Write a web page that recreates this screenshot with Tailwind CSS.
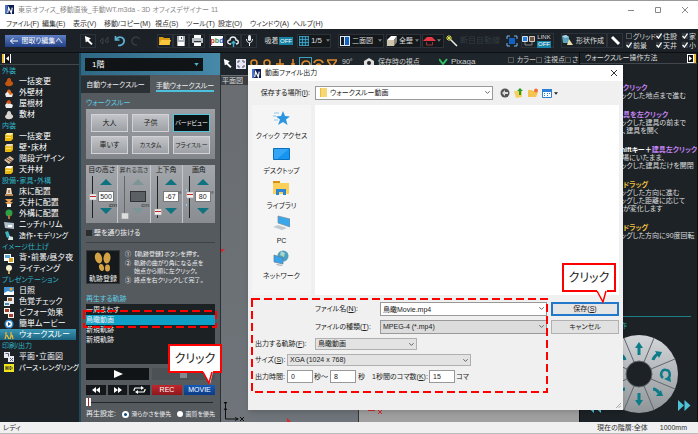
<!DOCTYPE html>
<html lang="ja">
<head>
  <meta charset="UTF-8">
  <title>3D オフィスデザイナー 11</title>
  <script src="https://cdn.jsdelivr.net/npm/@tailwindcss/browser@4"></script>
</head>
<body class="h-screen overflow-hidden flex flex-col relative bg-[#1d2327] font-['Liberation_Sans','Noto_Sans_CJK_JP',sans-serif] [font-feature-settings:'palt'] text-[7px] leading-[10px] whitespace-nowrap">

<!-- Shared icons -->
<svg class="hidden">
  <symbol id="logo" viewBox="0 0 10 10"><path fill="#0d1c50" d="M0 0h10v10H0z"/><path fill="#4a74c8" d="M0 0h3l-1 10H0z"/><path fill="none" stroke="#fff" stroke-width="1.3" d="M3 9l1-6 3 6 1-6"/></symbol>
  <symbol id="cursor" viewBox="0 0 12 12"><path fill="#fff" d="M2 1l1 7 2-1 4 4 1.500-1.500-4-4 2-2z"/></symbol>
  <symbol id="down" viewBox="0 0 8 8"><path fill="none" stroke="#555" d="M1.500 2.500L4 5l2.500-2.500"/></symbol>
  <symbol id="tri" viewBox="0 0 6 4"><path fill="#777f85" d="M0 0h6L3 4z"/></symbol>
  <symbol id="mound" viewBox="0 0 10 10"><path fill="currentColor" d="M1 7c0-2 2-2 2-4 1-3 4-2 4 0 0 2 3 2 2 4-1 3-7 3-8 0z"/></symbol>
  <symbol id="block" viewBox="0 0 10 10"><path fill="#e9b90e" d="M1 3l2-2h6v6L7 9H1z"/><path fill="currentColor" d="M1 3l2-2h6L7 3.500z"/><path fill="#fbe66a" d="M2 5h5v1H2z"/></symbol>
  <symbol id="up" viewBox="0 0 14 8"><path fill="currentColor" d="M7 0l7 7H0z"/></symbol>
  <symbol id="dn" viewBox="0 0 14 8"><path fill="currentColor" d="M7 8l7-7H0z"/></symbol>
  <symbol id="tick" viewBox="0 0 6 6"><path fill="none" stroke="#fff" stroke-width="1.300" d="M.5 3L2.500 5 5.500.5"/></symbol>
</svg>

<!-- Title bar -->
<header class="bg-white border-t border-[#999] shrink-0">
  <div class="h-[17px] flex items-center pl-[5px] pr-2 text-[#888]">
    <svg class="size-[9px] mr-1"><use href="#logo"/></svg>
    <h1>東京オフィス_移動直後_手動WT.m3da - 3D オフィスデザイナー 11</h1>
    <div class="ml-auto flex gap-[19px] mr-[1px]">
      <button aria-label="最小化"><svg class="size-[8px]" viewBox="0 0 8 8"><path stroke="#888" d="M1 4.500h6"/></svg></button>
      <button aria-label="最大化"><svg class="size-[8px]" viewBox="0 0 8 8"><path fill="none" stroke="#888" d="M1.500 1.500h5v5h-5z"/></svg></button>
      <button aria-label="閉じる"><svg class="size-[8px]" viewBox="0 0 8 8"><path stroke="#888" d="M1 1l6 6M7 1L1 7"/></svg></button>
    </div>
  </div>
  <nav class="h-[11px] grid grid-cols-[36px_31px_31px_51px_31px_32px_32px_43px_1fr] items-center pl-[6px] text-[#333]">
    <a href="#">ファイル(F)</a><a href="#">編集(E)</a><a href="#">表示(V)</a><a href="#">移動/コピー(M)</a><a href="#">視点(S)</a><a href="#">ツール(T)</a><a href="#">設定(O)</a><a href="#">ウィンドウ(A)</a><a href="#">ヘルプ(H)</a>
  </nav>
</header>

<!-- Main toolbar -->
<div class="h-[24px] shrink-0 flex items-center pl-[5px] bg-[#1b2126] text-[#ddd] border-b border-[#0c0f12] overflow-hidden">
  <button class="w-[61px] h-[12px] flex items-center justify-center gap-1 bg-linear-to-b from-[#5f7fc4] to-[#223f86] text-white shrink-0">
    <svg class="w-[9px] h-[8px]" viewBox="0 0 9 8"><path fill="none" stroke="#fff" d="M4.500 1L1.500 4l3 3M1.500 4H9"/></svg>間取り編集へ
  </button>
  <div class="flex ml-[14px] shrink-0">
    <button aria-label="選択" class="w-[16px] h-[14px] grid place-items-center border border-[#2c3338]"><svg class="size-[11px]"><use href="#cursor"/></svg></button>
    <button aria-label="複写" class="w-[16px] grid place-items-center"><svg class="size-[10px]" viewBox="0 0 10 10"><path fill="none" stroke="#394147" d="M1 5l3-3v6zM6 5l3-4v6z"/></svg></button>
    <button aria-label="元に戻す" class="w-[16px] grid place-items-center"><svg class="size-[12px]" viewBox="0 0 12 12"><path fill="none" stroke="#5eb1d3" stroke-width="1.700" d="M2 4c4-4 9-1 8 3-.5 2-3 3.500-6 3.500M1.500 1v4h4"/></svg></button>
    <button aria-label="やり直し" class="w-[16px] grid place-items-center"><svg class="size-[12px]" viewBox="0 0 12 12"><path fill="none" stroke="#333b41" stroke-width="1.500" d="M10 4C6 0 1 3 2 7c.5 2 3 3 5 3"/></svg></button>
  </div>
  <div class="flex ml-[13px] shrink-0">
    <button aria-label="開く" class="w-[16px] h-[14px] grid place-items-center border border-[#2c3338]"><svg class="size-[12px]" viewBox="0 0 12 12"><path fill="#d99a12" d="M0 2h4l1 1h6v7H0z"/><path fill="#fbc63b" d="M2 5h10l-2 5H0z"/></svg></button>
    <button aria-label="保存" class="w-[16px] h-[14px] grid place-items-center border border-[#2c3338]"><svg class="size-[10px]" viewBox="0 0 10 10"><path fill="#aab2b8" d="M1 0h8v10H1z"/><path fill="#fff" d="M3 0h4v4H3zM2 6h6v4H2z"/><path fill="#444" d="M5 1h1v2H5z"/></svg></button>
    <button aria-label="印刷" class="w-[16px] h-[14px] grid place-items-center border border-[#2c3338]"><svg class="size-[11px]" viewBox="0 0 11 11"><path fill="#fff" d="M2 0h7v3H2zM2 7h7v4H2z"/><path fill="#b6bec4" d="M0 3h11v5H0z"/><path fill="#333" d="M2 6h7v1H2z"/></svg></button>
  </div>
  <div class="flex ml-1 shrink-0">
    <button class="w-[16px] h-[14px] grid place-items-center border border-[#2c3338]"><span class="bg-white text-[#c33] font-bold leading-[10px]">p<span class="text-[#2a9a3a]">b</span><span class="text-[#2855c8]">d</span></span></button>
    <button aria-label="クラウド" class="w-[16px] h-[14px] grid place-items-center border border-[#2c3338]"><svg class="size-[12px]" viewBox="0 0 12 12"><path fill="none" stroke="#e8eef2" stroke-width="1.400" d="M4 9H3C0 9 0 5 3 5c0-4 6-4 6 0 3 0 3 4 0 4"/><path fill="none" stroke="#3db3d0" stroke-width="1.400" d="M6.500 12V6.500M4.500 8.500l2-2 2 2"/></svg></button>
    <button aria-label="音声" class="w-[16px] h-[14px] grid place-items-center border border-[#2c3338]"><svg class="size-[11px]" viewBox="0 0 11 11"><rect x="4" y="0" width="3" height="6" rx="1.500" fill="#e8eef2"/><path fill="none" stroke="#e8eef2" d="M2.500 4c0 5 6 5 6 0M5.500 8v3"/></svg></button>
  </div>
  <button class="ml-[7px] flex items-center shrink-0"><span class="w-[15px]">吸着</span><span class="w-[14px] h-[8px] leading-[8px] bg-[#1583a5] text-white text-[6px] text-center">OFF</span></button>
  <button class="ml-[4px] w-[34px] h-[14px] flex items-center gap-[2px] pl-px border border-[#2c3338] bg-[#14181b] text-[8px] shrink-0">
    <svg class="size-[10px]" viewBox="0 0 10 10"><path fill="#12394a" d="M0 0h10v10H0z"/><path stroke="#46aed0" d="M0 .5h10M0 3.500h10M0 6.500h10M0 9.500h10M.5 0v10M3.500 0v10M6.500 0v10M9.500 0v10" stroke-width=".8"/></svg>1/5<svg class="w-[4px] h-[3px] ml-[2px]"><use href="#tri"/></svg>
  </button>
  <button class="ml-[7px] w-[46px] h-[14px] flex items-center gap-[2px] pl-px border border-[#2c3338] bg-[#14181b] shrink-0">
    <svg class="size-[10px]" viewBox="0 0 10 10"><path fill="#dce9f5" d="M0 0h10v10H0z"/><path fill="#125fc1" d="M5 1h4v8H5z"/><path fill="#101820" d="M1 1h3v8H1z"/></svg>二面図<svg class="w-[4px] h-[3px] ml-[3px]"><use href="#tri"/></svg>
  </button>
  <button class="ml-[2px] w-[35px] h-[14px] flex items-center gap-[2px] border border-[#2c3338] bg-[#14181b] shrink-0">
    <svg class="size-[10px]" viewBox="0 0 10 10"><path fill="#fff" d="M0 4l4-4h6L7 4z"/><path fill="#cfc4ae" d="M0 4h7v6H0z"/><path fill="#8d8676" d="M7 4l3-4v6l-3 4z"/></svg>全壁<svg class="w-[4px] h-[3px]"><use href="#tri"/></svg>
  </button>
  <button aria-label="屋根" class="ml-px w-[22px] h-[14px] flex items-center gap-px border border-[#2c3338] bg-[#14181b] shrink-0">
    <svg class="w-[13px] h-[10px]" viewBox="0 0 13 10"><path fill="#e53945" d="M0 5l4-4h5l4 4z"/><path fill="none" stroke="#a3323a" d="M3.500 6v3h6V6"/></svg><svg class="w-[4px] h-[3px]"><use href="#tri"/></svg>
  </button>
  <button aria-label="自動" class="w-[16px] grid place-items-center shrink-0"><svg class="size-[12px]" viewBox="0 0 12 12"><path stroke="#eee" stroke-width="1.500" d="M4 4l7 7"/><path stroke="#d9e04a" d="M3 0v6M0 3h6M1 1l4 4M5 1L1 5"/></svg></button>
  <span class="w-[44px] text-[8px] text-[#343b41] shrink-0">断目自動線</span>
  <button aria-label="全画面" class="w-[16px] grid place-items-center shrink-0"><svg class="size-[12px]" viewBox="0 0 12 12"><path fill="#1261c4" d="M3 3h6v6H3z"/><path fill="none" stroke="#7ab8e8" d="M1 4V1h3M8 1h3v3M11 8v3H8M4 11H1V8"/></svg></button>
  <button class="ml-px w-[33px] h-[15px] flex items-center gap-px border border-[#2c3338] shrink-0">
    <svg class="w-[14px] h-[11px]" viewBox="0 0 14 11"><path fill="#2c7de0" stroke="#cfe0f0" d="M.5 1.500h5v5h-5z"/><path fill="#6f5345" stroke="#d8c8bb" d="M7.500 1.500h5v5h-5z"/><path stroke="#888" fill="none" d="M3 7v3h7V7"/></svg>
    <span class="w-[14px] text-[6px] leading-[7px] text-center">LINK<span class="block bg-[#1583a5] text-white">OFF</span></span>
  </button>
  <button class="ml-[7px] w-[46px] h-[15px] flex items-center gap-[3px] border border-[#2c3338] shrink-0">
    <svg class="size-[11px]" viewBox="0 0 11 11"><path fill="#5aa3bd" d="M0 1l4-1 3 2v6H1z"/><path fill="#a9d4e2" d="M0 1l4-1 3 2-4 1z"/><path fill="#e9dfae" d="M7 4l4 6H5z"/></svg>形状作成
  </button>
  <button aria-label="計測" class="w-[16px] h-[15px] grid place-items-center border border-[#2c3338] shrink-0"><svg class="size-[11px]" viewBox="0 0 11 11"><path stroke="#fff" stroke-width="3" d="M2 2l7 7"/></svg></button>
  <div class="ml-[3px] grid grid-cols-[30px_26px_16px] grid-rows-[9px_9px] leading-[9px] shrink-0">
    <label class="flex items-center gap-px"><input type="checkbox" class="appearance-none size-[6px] border border-[#50585e]">グリッド</label>
    <label class="relative flex items-center gap-px"><input type="checkbox" checked class="appearance-none size-[6px] bg-[#33393d]"><svg class="absolute left-0 size-[6px]"><use href="#tick"/></svg>住設</label>
    <label class="relative flex items-center gap-px"><input type="checkbox" checked class="appearance-none size-[6px] bg-[#33393d]"><svg class="absolute left-0 size-[6px]"><use href="#tick"/></svg>家</label>
    <label class="relative flex items-center gap-px"><input type="checkbox" checked class="appearance-none size-[6px] bg-[#33393d]"><svg class="absolute left-0 size-[6px]"><use href="#tick"/></svg>前景</label>
    <label class="relative flex items-center gap-px"><input type="checkbox" checked class="appearance-none size-[6px] bg-[#33393d]"><svg class="absolute left-0 size-[6px]"><use href="#tick"/></svg>天井</label>
    <label class="relative flex items-center gap-px"><input type="checkbox" checked class="appearance-none size-[6px] bg-[#33393d]"><svg class="absolute left-0 size-[6px]"><use href="#tick"/></svg>小</label>
  </div>
</div>

<main class="flex-1 min-h-0 flex">

  <!-- Menu tree -->
  <aside class="w-[81px] shrink-0 bg-[#1c2226] border-r-2 border-[#20485a] text-white overflow-hidden">
    <div class="h-[12px] pl-[2px] pt-px border-b border-[#41474c]">
      <button aria-label="折りたたむ" class="block"><svg class="size-[9px]" viewBox="0 0 9 9"><path fill="#fff" d="M0 0h9v9H0z"/><path fill="#f2bd3a" d="M0 0h2v9H0z"/><path fill="#111" d="M3 0h5v9H3z"/><path fill="#fff" d="M7 2v5L4 4.500z"/></svg></button>
    </div>
    <ul class="leading-[11px] *:h-[11px] *:flex *:items-center">
      <li class="pl-[2px] text-[#31b4c6]">外装</li>
      <li class="pl-[4px] gap-[5px] text-[8px]"><svg class="size-[10px] text-[#c2560f]"><use href="#mound"/></svg><a href="#">一括変更</a></li>
      <li class="pl-[4px] gap-[5px] text-[8px]"><svg class="size-[10px]" viewBox="0 0 10 10"><path fill="#eee" d="M1 6l3-3 5 3-1 3H2z"/><path fill="#e46a1b" d="M3 3c2-3 4-1 4 1l2 2-3 1z"/></svg><a href="#">外壁材</a></li>
      <li class="pl-[4px] gap-[5px] text-[8px]"><svg class="size-[10px]" viewBox="0 0 10 10"><path fill="#eee" d="M1 6l3-3 5 3-1 3H2z"/><path fill="#d4541a" d="M2 4c2-5 5-3 5 0L5 5z"/></svg><a href="#">屋根材</a></li>
      <li class="pl-[4px] gap-[5px] text-[8px]"><svg class="size-[10px] text-[#d8d4d0]"><use href="#mound"/></svg><a href="#">敷材</a></li>
      <li class="pl-[2px] text-[#31b4c6]">内装</li>
      <li class="pl-[4px] gap-[5px] text-[8px]"><svg class="size-[10px] text-[#fff3a0]"><use href="#block"/></svg><a href="#">一括変更</a></li>
      <li class="pl-[4px] gap-[5px] text-[8px]"><svg class="size-[10px] text-[#e9dcc0]"><use href="#block"/></svg><a href="#">壁・床材</a></li>
      <li class="pl-[4px] gap-[5px] text-[8px]"><svg class="size-[10px]" viewBox="0 0 10 10"><path fill="#d8c0a4" d="M0 6l6-4 4 3-5 5z"/><path stroke="#7a5236" d="M2 5l5 3M4 4l5 3"/></svg><a href="#">階段デザイン</a></li>
      <li class="pl-[4px] gap-[5px] text-[8px]"><svg class="size-[10px] text-white"><use href="#block"/></svg><a href="#">天井材</a></li>
      <li class="pl-[2px] text-[#31b4c6]">設備・家具・外構</li>
      <li class="pl-[4px] gap-[5px] text-[8px]"><svg class="size-[10px]" viewBox="0 0 10 10"><path fill="#eadfcb" d="M3 1h4l1 6H2z"/><path fill="#b98a54" d="M1 7h8v2H1zM4 3h2v3H4z"/></svg><a href="#">床に配置</a></li>
      <li class="pl-[4px] gap-[5px] text-[8px]"><svg class="size-[10px]" viewBox="0 0 10 10"><path fill="#e9a65a" d="M1 1h8L6 4h3L5 8 1 4h3z"/><path fill="#fff" d="M3 6h4v3H3z"/></svg><a href="#">天井に配置</a></li>
      <li class="pl-[4px] gap-[5px] text-[8px]"><svg class="size-[10px]" viewBox="0 0 10 10"><circle cx="5" cy="4" r="3.500" fill="#2fa043"/><path fill="#a4713f" d="M4 6h2v4H4z"/></svg><a href="#">外構に配置</a></li>
      <li class="pl-[4px] gap-[5px] text-[8px]"><svg class="size-[10px]" viewBox="0 0 10 10"><path fill="#aebecb" d="M0 2l10 1v6L1 8z"/><path fill="#fff" d="M4 5h4v2H4z"/></svg><a href="#">ニッチ/トリム</a></li>
      <li class="pl-[4px] gap-[5px]"><svg class="size-[10px]" viewBox="0 0 10 10"><path fill="#3fb3c0" d="M1 1l3-1 2 5-3 2z"/><path fill="#cfe6e6" d="M5 5l4 1v3H4z"/></svg><a href="#">造作・モデリング</a></li>
      <li class="pl-[2px] text-[#31b4c6]">イメージ仕上げ</li>
      <li class="pl-[4px] gap-[5px] text-[8px]"><svg class="size-[10px]" viewBox="0 0 10 10"><path fill="#fff" d="M0 1h7v7H0zM4 4h6v6H4z"/><path fill="#58a6da" d="M1 2h5v3H1z"/><path fill="#d8a22a" d="M5 5h4v4H5z"/></svg><a href="#">背・前景/昼夕夜</a></li>
      <li class="pl-[4px] gap-[5px] text-[8px]"><svg class="size-[10px]" viewBox="0 0 10 10"><circle cx="5" cy="4" r="3" fill="#f5efcf"/><path fill="#bba85d" d="M4 7h2v3H4z"/></svg><a href="#">ライティング</a></li>
      <li class="pl-[2px] text-[#31b4c6]">プレゼンテーション</li>
      <li class="pl-[4px] gap-[5px] text-[8px]"><svg class="size-[10px]" viewBox="0 0 10 10"><path fill="#3f93d8" d="M0 1h10v8H0z"/><path fill="#fff" d="M0 7l4-2 3 1 3-1v4H0z"/><circle cx="7" cy="3" r="1.500" fill="#f3a02a"/></svg><a href="#">日照</a></li>
      <li class="pl-[4px] gap-[5px] text-[8px]"><svg class="size-[10px]" viewBox="0 0 10 10"><path fill="#e8e8e8" d="M3 0h7v7H3zM0 4h6v5H0z"/><path fill="#8a5e3a" d="M4 1h4v3H4z"/><path fill="#4a85c0" d="M1 6h4v2H1z"/></svg><a href="#">色覚チェック</a></li>
      <li class="pl-[4px] gap-[5px] text-[8px]"><svg class="size-[10px]" viewBox="0 0 10 10"><path fill="#f5f0ea" d="M0 0h6v6H0zM4 4h6v6H4z"/><path fill="#a23b30" d="M1 1h4v3H1zM5 6h4v3H5z"/></svg><a href="#">ビフォー効果</a></li>
      <li class="pl-[4px] gap-[5px] text-[8px]"><svg class="size-[10px]" viewBox="0 0 10 10"><circle cx="5" cy="5" r="4.500" fill="#3c8dcc"/><circle cx="5" cy="5" r="3" fill="#fff"/><path fill="#155a94" d="M4 3v4l3-2z"/></svg><a href="#">簡単ムービー</a></li>
      <li class="pl-[4px] gap-[5px] text-[8px] bg-linear-to-b from-[#3b98b5] to-[#1a6480] mr-[3px]"><svg class="size-[10px]" viewBox="0 0 10 10"><path fill="none" stroke="#e8b83a" stroke-width="1.300" d="M2 2v4l-1 3M3 5l2 4M7 2v4L6 9M8 5l1 4"/></svg><a href="#">ウォークスルー</a></li>
      <li class="pl-[2px] text-[#31b4c6]">印刷/出力</li>
      <li class="pl-[4px] gap-[5px] text-[8px]"><svg class="size-[10px]" viewBox="0 0 10 10"><path fill="#e9e9ee" d="M0 0h6v6H0zM4 4h6v6H4z"/><path fill="none" stroke="#52628a" d="M1.500 1.500h3v3M6 6l3 3M9 6L6 9"/></svg><a href="#">平面・立面図</a></li>
      <li class="pl-[4px] gap-[5px]"><svg class="size-[10px] shrink-0" viewBox="0 0 10 10"><path fill="#f0e41c" d="M0 1h10v8H0z"/><path fill="none" stroke="#333" d="M2 3v4M4 3v4M2 5h2M6 3.500h1l1 1v1l-1 1H6z"/></svg><a href="#">パース・レンダリング</a></li>
    </ul>
  </aside>

  <!-- Walk-through panel -->
  <section class="w-[140px] shrink-0 bg-[#555a5f] text-[#eee] border-r border-[#2b3034] flex flex-col">
    <div class="h-[22px] shrink-0 bg-linear-to-r from-[#2e6885] to-[#4689a8] pl-[4px] pt-[5px]">
      <label class="relative block w-[118px]"><span class="sr-only">階</span>
        <select class="appearance-none block w-full h-[13px] bg-[#101416] text-white pl-[7px] text-[8px]"><option>1階</option></select>
        <svg class="absolute right-[4px] top-[5px] w-[5px] h-[3px]" viewBox="0 0 6 4"><path fill="#4fb3cc" d="M0 0h6L3 4z"/></svg>
      </label>
    </div>
    <div class="flex h-[18px] shrink-0">
      <button class="w-[69px] bg-[#2b3035] border-t border-[#3c4247]">自動ウォークスルー</button>
      <button class="flex-1 pt-[3px]"><span class="border-b-2 border-[#4cc0dc] pb-px">手動ウォークスルー</span></button>
    </div>
    <div class="px-[5px] flex flex-col">
      <h2 class="mt-[5px] text-[#5ccbe2]">ウォークスルー</h2>
      <div class="mt-px p-[5px] grid grid-cols-3 gap-[4px] bg-linear-to-b from-[#9da0a4] to-[#83878b] text-[#222]">
        <button class="h-[18px] bg-linear-to-b from-[#c2c4c8] to-[#9da0a4] border border-[#d0d2d5]">大人</button>
        <button class="h-[18px] bg-linear-to-b from-[#c2c4c8] to-[#9da0a4] border border-[#d0d2d5]">子供</button>
        <button class="h-[18px] bg-[#0c1114] text-white text-[6px] border border-[#52c4dc]">バードビュー</button>
        <button class="h-[18px] bg-linear-to-b from-[#c2c4c8] to-[#9da0a4] border border-[#d0d2d5]">車いす</button>
        <button class="h-[18px] bg-linear-to-b from-[#c2c4c8] to-[#9da0a4] border border-[#d0d2d5] text-[6px]">カスタム</button>
        <button class="h-[18px] bg-linear-to-b from-[#c2c4c8] to-[#9da0a4] border border-[#d0d2d5] text-[6px]">フライスルー</button>
      </div>
      <div class="mt-[6px] h-[58px] grid grid-cols-4 bg-linear-to-b from-[#a4a7ab] to-[#898d91] divide-x divide-[#c4c6c9] text-[#1c1c1c] text-center">
        <div>
          <label for="eye">目の高さ</label>
          <div class="flex px-[3px] gap-px">
            <svg class="w-[8px] h-[44px] shrink-0" viewBox="0 0 8 44"><path stroke="#222" d="M3.500 1v42"/><rect x=".5" y="19" width="7" height="6" fill="#eee" stroke="#999" stroke-width=".5"/><path fill="#c22" d="M1 21h6v1H1z"/></svg>
            <div class="relative flex flex-col items-center gap-[5px] pt-[4px]">
              <svg class="w-[12px] h-[7px] text-[#0e7280]"><use href="#up"/></svg>
              <input id="eye" value="500" class="w-[16px] h-[11px] bg-white border border-[#777] text-center">
              <svg class="w-[12px] h-[7px] text-[#0e7280]"><use href="#dn"/></svg>
              <span class="absolute top-[25px] -right-[3px] text-[6px]">cm</span>
            </div>
          </div>
        </div>
        <div class="text-[#333]">
          <label for="rise" class="text-[6px]">昇れる高さ</label>
          <div class="flex px-[3px] gap-px">
            <svg class="w-[8px] h-[44px] shrink-0" viewBox="0 0 8 44"><path stroke="#666" d="M3.500 1v42"/><rect x=".5" y="38" width="7" height="6" fill="#ddd" stroke="#999" stroke-width=".5"/></svg>
            <div class="relative flex flex-col items-center gap-[5px] pt-[4px]">
              <svg class="w-[12px] h-[7px] text-[#7d9597]"><use href="#up"/></svg>
              <input id="rise" disabled class="w-[16px] h-[11px] bg-[#5b6064] border border-[#333]">
              <svg class="w-[12px] h-[7px] text-[#7d9597]"><use href="#dn"/></svg>
              <span class="absolute top-[25px] -right-[3px] text-[6px]">cm</span>
            </div>
          </div>
        </div>
        <div>
          <label for="tilt">上下角</label>
          <div class="flex px-[3px] gap-px">
            <svg class="w-[8px] h-[44px] shrink-0" viewBox="0 0 8 44"><path stroke="#222" d="M3.500 1v42"/><rect x=".5" y="34" width="7" height="6" fill="#eee" stroke="#999" stroke-width=".5"/><path fill="#c22" d="M1 36h6v1H1z"/></svg>
            <div class="relative flex flex-col items-center gap-[5px] pt-[4px]">
              <svg class="w-[12px] h-[7px] text-[#0e7280]"><use href="#up"/></svg>
              <input id="tilt" value="-67" class="w-[16px] h-[11px] bg-white border border-[#777] text-center">
              <svg class="w-[12px] h-[7px] text-[#0e7280]"><use href="#dn"/></svg>
              <span class="absolute top-[15px] -right-[3px]">°</span>
            </div>
          </div>
        </div>
        <div>
          <label for="fov">画角</label>
          <div class="flex px-[3px] gap-px">
            <svg class="w-[8px] h-[44px] shrink-0" viewBox="0 0 8 44"><path stroke="#222" d="M3.500 1v42"/><rect x=".5" y="17" width="7" height="6" fill="#eee" stroke="#999" stroke-width=".5"/><path fill="#c22" d="M1 19h6v1H1z"/><path fill="#8fd6f2" d="M0 14h1v2H0zM0 29h1v2H0z"/></svg>
            <div class="relative flex flex-col items-center gap-[5px] pt-[4px]">
              <svg class="w-[12px] h-[7px] text-[#0e7280]"><use href="#up"/></svg>
              <input id="fov" value="80" class="w-[16px] h-[11px] bg-white border border-[#777] text-center">
              <svg class="w-[12px] h-[7px] text-[#0e7280]"><use href="#dn"/></svg>
              <span class="absolute top-[15px] -right-[3px]">°</span>
            </div>
          </div>
        </div>
      </div>
      <label class="mt-[5px] flex items-center gap-[2px]"><input type="checkbox" class="appearance-none size-[6px] bg-[#2a2e31]">壁を通り抜ける</label>
      <div class="mt-[4px] pt-[7px] border-t border-[#3d4246] flex gap-[5px]">
        <button class="w-[34px] h-[34px] bg-[#15191b] border border-[#33383b] flex flex-col items-center shrink-0">
          <svg class="w-[20px] h-[23px]" viewBox="0 0 20 23"><g fill="#d4a244"><ellipse cx="5.500" cy="7" rx="3.500" ry="5.500" transform="rotate(-14 5.500 7)"/><ellipse cx="8.500" cy="16.500" rx="2.500" ry="3.500" transform="rotate(-14 8.500 16.500)"/><ellipse cx="14" cy="7" rx="3.500" ry="5.500" transform="rotate(5 14 7)"/><ellipse cx="14.500" cy="17" rx="2.500" ry="3.500"/></g></svg>
          <span class="leading-[9px]">軌跡登録</span>
        </button>
        <ol class="leading-[8px] text-[6px]">
          <li class="flex gap-[3px] mb-px"><span>①</span>【軌跡登録】ボタンを押す。</li>
          <li class="flex gap-[3px] mb-px"><span>②</span><span>軌跡の曲がり角になる点を<br>始点から順に左クリック。</span></li>
          <li class="flex gap-[3px]"><span>③</span>終点を右クリックして完了。</li>
        </ol>
      </div>
      <h2 class="mt-[10px] text-[#5ccbe2]">再生する軌跡</h2>
      <ul class="h-[60px] bg-[#1c2124] leading-[10px] pt-px">
        <li>一周まわす</li>
        <li class="bg-[#0e9fc6]">鳥瞰動画</li>
        <li>新規軌跡</li>
        <li>新規軌跡</li>
      </ul>
      <div class="mt-[4px] grid grid-cols-2 gap-[3px]">
        <button aria-label="再生" class="h-[12px] bg-[#101416] grid place-items-center"><svg class="w-[10px] h-[8px]" viewBox="0 0 10 8"><path fill="#fff" d="M1 0l9 4-9 4z"/></svg></button>
        <button aria-label="停止" class="h-[12px] bg-[#4c5155] grid place-items-center"><span class="size-[7px] bg-[#85898d]"></span></button>
      </div>
      <div class="mt-[5px] grid grid-cols-[20px_19px_21px_30px_1fr] gap-[2px] text-white">
        <button aria-label="早戻し" class="h-[10px] bg-[#14181a] grid place-items-center"><svg class="w-[8px] h-[6px]" viewBox="0 0 8 6"><path fill="#fff" d="M4 0v6L0 3zM8 0v6L4 3z"/></svg></button>
        <button aria-label="早送り" class="h-[10px] bg-[#14181a] grid place-items-center"><svg class="w-[8px] h-[6px]" viewBox="0 0 8 6"><path fill="#fff" d="M0 0v6l4-3zM4 0v6l4-3z"/></svg></button>
        <button aria-label="繰り返し" class="h-[10px] bg-[#14181a] grid place-items-center"><svg class="w-[13px] h-[8px]" viewBox="0 0 13 8"><path fill="none" stroke="#fff" stroke-width="1.200" d="M1 5V4l1-2h7M12 3v1l-1 2H4"/><path fill="#fff" d="M8 0l3 2-3 2zM5 4v4L2 6z"/></svg></button>
        <button class="h-[10px] bg-linear-to-b from-[#c1272d] to-[#8d181d]">REC</button>
        <button class="h-[10px] bg-linear-to-b from-[#1559b5] to-[#0c3b86]">MOVIE</button>
      </div>
      <div class="mt-[3px] h-[8px] flex items-center"><span class="w-[5px] h-[8px] bg-[#a22] border-x-2 border-white"></span><span class="flex-1 h-px bg-[#23272a] mr-[2px]"></span></div>
      <fieldset class="mt-[3px] flex items-center text-[6px] justify-between">
        <legend class="float-left text-[7px]">再生設定:</legend>
        <label class="flex items-center gap-[2px]"><input type="radio" name="play" checked class="appearance-none size-[7px] rounded-full bg-[#0b4f86] border-2 border-white">滑らかさを優先</label>
        <label class="flex items-center gap-[2px]"><input type="radio" name="play" class="appearance-none size-[6px] rounded-full bg-white">画質を優先</label>
      </fieldset>
    </div>
  </section>

  <!-- Plan view -->
  <section class="flex-1 min-w-0 flex flex-col">
    <div class="h-[22px] shrink-0 bg-[#1f262b] flex items-start pt-[4px] text-[#ccc] overflow-hidden">
      <div class="flex *:w-[13px] *:h-[13px] *:grid *:place-items-center">
        <button aria-label="選択"><svg class="size-[11px]"><use href="#cursor"/></svg></button>
        <button aria-label="全体"><svg class="size-[10px]" viewBox="0 0 10 10"><path fill="#e6e6f4" d="M0 0h10v10H0z"/><path stroke="#556" fill="none" d="M2 4V2h2M6 2h2v2M8 6v2H6M4 8H2V6"/></svg></button>
        <button aria-label="回転"><svg class="size-[10px]" viewBox="0 0 10 10"><circle cx="5" cy="4" r="3" fill="none" stroke="#e08a2a" stroke-width="1.500"/></svg></button>
        <button aria-label="拡大"><svg class="size-[10px]" viewBox="0 0 10 10"><circle cx="5" cy="4" r="3" fill="none" stroke="#e08a2a" stroke-width="1.500"/><path stroke="#e08a2a" d="M5 7v3"/></svg></button>
        <button aria-label="移動"><svg class="size-[10px]" viewBox="0 0 10 10"><path fill="none" stroke="#e08a2a" stroke-width="1.500" d="M5 0v10M1 5h8"/></svg></button>
        <button aria-label="上下"><svg class="size-[10px]" viewBox="0 0 10 10"><path stroke="#e08a2a" stroke-width="1.500" d="M5 0v10M3 5h4"/></svg></button>
        <button aria-label="周回" class="border border-[#3ca0b8]"><svg class="size-[10px]" viewBox="0 0 10 10"><circle cx="5" cy="6" r="4" fill="none" stroke="#e08a2a" stroke-width="1.700"/></svg></button>
        <button aria-label="見回し"><svg class="size-[11px]" viewBox="0 0 11 11"><path fill="none" stroke="#e08a2a" stroke-width="1.700" d="M1 5c1-4 8-4 9 0M3 9c0-4 5-4 5 0"/></svg></button>
        <button aria-label="画角"><svg class="size-[10px]" viewBox="0 0 10 10"><path fill="none" stroke="#e08a2a" stroke-width="1.500" d="M0 1h10L5 8z"/></svg></button>
      </div>
      <span class="w-[26px] pl-[4px]">90°</span>
      <button class="flex items-center w-[62px] gap-[4px]"><svg class="w-[10px] h-[8px]" viewBox="0 0 10 8"><path fill="#ddd" d="M0 3l5-3 5 3v5H0z"/><circle cx="5" cy="5" r="2" fill="#222"/></svg>保存時の視点</button>
      <button class="flex items-center ml-[13px] w-[52px] gap-[3px] text-[8px]"><svg class="w-[9px] h-[8px]" viewBox="0 0 9 8"><path fill="none" stroke="#2fc464" stroke-width="2" d="M0 1l4 5 4-5"/></svg>Pixaga</button>
      <label class="flex items-center -mt-[2px] ml-[17px] w-[28px] gap-[3px] shrink-0"><input type="checkbox" class="appearance-none size-[6px] border border-[#555]">カラー</label>
      <label class="flex items-center -mt-[2px] w-[29px] gap-[2px] shrink-0"><input type="checkbox" class="appearance-none size-[6px] border border-[#555]">注視点</label>
      <label class="flex items-center -mt-[2px] gap-px shrink-0"><input type="checkbox" class="appearance-none size-[6px] border border-[#555]">さ</label>
    </div>
    <div class="flex-1 flex relative">
      <div class="w-[137px] bg-linear-to-b from-[#696d72] to-[#6e7479] relative">
        <span class="absolute left-0 top-px w-[27px] h-[9px] leading-[9px] pl-px bg-[#3c4145] text-[#ddd]">平面図</span>
        <svg class="absolute left-[1px] bottom-0 w-[24px] h-[20px]" viewBox="0 0 24 20"><path fill="none" stroke="#111" d="M3.500 5v12h13M2 8l1.500-2L5 8M13 15.500l3 1.500-3 1.500"/><path stroke="#111" d="M2 0l1.500 2L5 0M3.500 2v3M18 15l4 4M22 15l-4 4"/></svg>
        <svg class="absolute left-0 top-[174px] size-[4px]" viewBox="0 0 4 4"><path fill="#d8262a" d="M0 0h4L0 4z"/></svg>
        <svg class="absolute left-[66px] bottom-0 size-[4px]" viewBox="0 0 4 4"><path fill="#d8262a" d="M0 0v4h4z"/></svg>
      </div>
      <div class="flex-1 bg-linear-to-b from-[#888] to-[#a0a0a0] border-l border-[#333]">
        <svg class="absolute left-[147px] bottom-[7px] w-[16px] h-[7px]" viewBox="0 0 16 7"><path stroke="#d8262a" d="M0 2.500h7M10 2l4 4M14 2l-4 4"/></svg>
      </div>
    </div>
  </section>

  <!-- Operation help -->
  <aside class="w-[119px] shrink-0 bg-[#1c2226] border-x border-[#0b0e10] text-[#ddd] flex flex-col overflow-hidden">
    <div class="h-[11px] shrink-0 flex items-center justify-between pl-[5px] border-b border-[#41474c]">
      <h2>ウォークスルー操作方法</h2>
      <button aria-label="折りたたむ" class="mr-px"><svg class="size-[9px]" viewBox="0 0 9 9"><path fill="#fff" d="M0 0h9v9H0z"/><path fill="#f2bd3a" d="M7 0h2v9H7z"/><path fill="#111" d="M1 1h5v7H1z"/><path fill="#fff" d="M2 2v5l3-2.500z"/></svg></button>
    </div>
    <dl class="pl-[29px] leading-[8px] pt-[20px]">
      <dt class="pl-[7px] font-bold text-[#c583f2]"><span class="text-white">左</span>クリック</dt>
      <dd>クリックした地点まで進む</dd>
      <dt class="pl-[7px] font-bold text-[#c583f2] mt-[11px]">建具を左クリック</dt>
      <dd>クリックした建具の前まで<br>進み、建具を開く</dd>
      <dt class="pl-[7px] font-bold text-[#c583f2] mt-[11px]"><span class="text-white">Shiftキー＋</span>建具左クリック</dt>
      <dd>その場にいたまま、<br>クリックした建具だけを開閉</dd>
      <dt class="pl-[7px] font-bold text-[#f0c040] mt-[11px]">左ドラッグ</dt>
      <dd>ドラッグした方向に進む<br>ドラッグした距離に応じて<br>速度が変化します</dd>
      <dt class="pl-[7px] font-bold text-[#f0c040] mt-[11px]">右ドラッグ</dt>
      <dd>ドラッグした方向に90度回転</dd>
    </dl>
    <div class="mt-auto mx-[6px] border-t border-[#1f7f80] pt-[4px] text-[#2fa8a8] pl-[13px] h-[106px] relative">移動操作
      <svg class="absolute left-[13px] top-[17px] w-[80px] h-[80px]" viewBox="-40 -40 80 80">
        <defs><linearGradient id="wheel" x1="0" y1="0" x2="0" y2="1"><stop offset="0" stop-color="#d4d7da"/><stop offset="1" stop-color="#909599"/></linearGradient></defs>
        <circle r="39" fill="url(#wheel)"/><circle r="13" fill="#1c2226" stroke="#60666a"/>
        <path stroke="#61676b" d="M5 12l10 24M-5 12l-10 24M5-12l10-24M-5-12l-10-24M12 5l24 10M12-5l24-10M-12 5l-24 10M-12-5l-24-10"/>
        <g fill="#0d7c88"><path d="M0-32l4 6H1.500v7h-3v-7H-4z"/><path d="M0 32l4-6H1.500v-7h-3v7H-4z"/></g>
        <g fill="none" stroke="#0d7c88" stroke-width="3"><path d="M14-14c1-4 3-5 5-6M14 15c1 0 4 1 6 4M-14-14c-1-4-3-5-5-6M-14 15c-1 0-4 1-6 4"/><path stroke-width="2.500" d="M24 4c-4-3-1-9 3-8 4 0 5 6 2 8"/></g>
        <g fill="#0d7c88"><path d="M16-23l7 1-3 6zM24 22l-7 0 5-6zM25 5l6-3 1 6zM-16-23l-7 1 3 6zM-24 22l7 0-5-6z"/></g>
      </svg>
      <button aria-label="右へ" class="absolute right-0 bottom-[11px]"><svg class="w-[13px] h-[11px]" viewBox="0 0 13 11"><path fill="#4fc3d8" d="M0 0l6 5.500L0 11zM6.500 0l6 5.500-6 5.500z"/></svg></button>
      <button aria-label="左へ" class="absolute left-[2px] bottom-[9px]"><svg class="w-[13px] h-[11px]" viewBox="0 0 13 11"><path fill="#4fc3d8" d="M6 0L0 5.500 6 11zM13 0L7 5.500l6 5.500z"/></svg></button>
    </div>
  </aside>
</main>

<!-- Status bar -->
<footer class="h-[12px] shrink-0 bg-[#f0f0f0] text-[#333] flex items-center px-[3px] border-b border-[#bbb]">
  <span>レディ</span><span class="ml-auto mr-[12px]">現在の階層:全体</span><span class="mr-[8px]">1000mm</span>
</footer>

<!-- Export dialog -->
<div role="dialog" aria-label="動画ファイル出力" class="absolute left-[248px] top-[65px] w-[375px] bg-[#f0f0f0] text-[#222] shadow-md">
  <div class="h-[16px] bg-white flex items-center pl-[4px] pr-[5px]">
    <svg class="size-[9px] mr-1"><use href="#logo"/></svg>動画ファイル出力
    <button aria-label="閉じる" class="ml-auto"><svg class="size-[8px]" viewBox="0 0 8 8"><path stroke="#333" d="M1 1l6 6M7 1L1 7"/></svg></button>
  </div>
  <div class="px-[4px] pt-[5px]">
    <div class="flex items-center h-[14px]">
      <label for="place" class="w-[63px] pr-[5px] text-right">保存する場所(<u>I</u>):</label>
      <div class="relative">
        <select id="place" class="appearance-none block w-[178px] h-[14px] bg-white border border-[#999] pl-[14px]"><option>ウォークスルー動画</option></select>
        <svg class="absolute left-[5px] top-[2px] w-[7px] h-[9px]" viewBox="0 0 7 9"><path fill="#f7d674" d="M0 0h7v9H0z"/><path fill="#e9bb45" d="M0 0h1v9H0z"/></svg>
        <svg class="absolute right-[2px] top-[3px] size-[7px]"><use href="#down"/></svg>
      </div>
      <div class="flex items-center gap-[4px] ml-[7px]">
        <button aria-label="戻る"><svg class="size-[10px]" viewBox="0 0 10 10"><circle cx="5" cy="5" r="4.500" fill="#555"/><path fill="#ddd" d="M5 2v2h3v2H5v2L2 5z"/></svg></button>
        <button aria-label="上へ"><svg class="size-[10px]" viewBox="0 0 10 10"><path fill="#f5cf5f" d="M0 3h8v6l-6 1z"/><path fill="#2a9a2a" d="M6 0l3 3H7v4H5V3H3z"/></svg></button>
        <button aria-label="新しいフォルダー"><svg class="size-[10px]" viewBox="0 0 10 10"><path fill="#f5c451" d="M0 2h4l1 1h3l2 1-2 5H0z"/><circle cx="8" cy="2.500" r="2" fill="#f2713a"/></svg></button>
        <button aria-label="表示" class="flex items-center gap-[2px]"><svg class="w-[10px] h-[9px]" viewBox="0 0 10 9"><path fill="#fff" stroke="#2d7fd6" d="M.5.5h9v8h-9z"/><path fill="#2d7fd6" d="M0 0h10v3H0zM2 4h1v1H2zM5 4h1v1H5zM7 4h1v1H7zM2 6h1v1H2zM5 6h1v1H5z"/></svg><svg class="w-[4px] h-[3px]" viewBox="0 0 6 4"><path fill="#222" d="M0 0h6L3 4z"/></svg></button>
      </div>
    </div>
    <div class="mt-[5px] flex">
      <nav class="w-[59px] mr-[4px] h-[190px] bg-[#f5f5f5] pt-[5px] flex flex-col gap-[4px] *:h-[31px] *:flex *:flex-col *:items-center *:justify-between">
        <a href="#"><svg class="w-[17px] h-[16px]" viewBox="0 0 17 16"><path fill="#2b95e0" d="M10 1l2 5 5 .5-4 3 1.500 5.500L10 12l-5 3 2-5.500L3 6.500l5-.5z"/><path stroke="#8fc8ee" d="M1 3h5M0 6h3M1 10h4"/></svg>クイック アクセス</a>
        <a href="#"><svg class="w-[17px] h-[16px]" viewBox="0 0 17 16"><path fill="#1594f0" stroke="#0b6fc0" d="M.5 3.500h16v11H.5z"/><path fill="#55b7fa" d="M1 4h15L4 14H1z" opacity=".5"/></svg>デスクトップ</a>
        <a href="#"><svg class="w-[17px] h-[16px]" viewBox="0 0 17 16"><path fill="#d98f12" d="M0 1h7v4H0z"/><path fill="#fbd05a" d="M0 3h16v11H0z"/><path fill="#2c86d2" d="M3 15V9h10v6h-3v-3H6v3z"/></svg>ライブラリ</a>
        <a href="#"><svg class="w-[17px] h-[16px]" viewBox="0 0 17 16"><path fill="#3aa6ec" stroke="#7c8a94" stroke-width=".7" d="M5 1l12 3v8L5 8z"/><path fill="#c2cad0" d="M0 12l5-2 9 3-5 2z"/></svg>PC</a>
        <a href="#"><svg class="w-[17px] h-[16px]" viewBox="0 0 17 16"><circle cx="10" cy="6" r="5.500" fill="#4f9fc0"/><path fill="#a8d6c4" d="M8 1l4 2-1 4-4-2z"/><path fill="#37a5ee" stroke="#6a7a86" stroke-width=".7" d="M1 5l9 3v6l-9-2z"/><path fill="#aab4bb" d="M4 14l6 1-2 1-5-1z"/></svg>ネットワーク</a>
      </nav>
      <div class="flex-1 bg-white"></div>
    </div>
    <div class="mt-[7px] flex gap-[4px] pl-[63px]">
      <div class="flex-1 grid grid-cols-[65px_1fr] gap-y-[4px] items-center">
        <label for="fname">ファイル名(<u>N</u>):</label>
        <div class="relative"><input id="fname" value="鳥瞰Movie.mp4" class="block w-full h-[14px] bg-white border border-[#999] px-[2px]"><svg class="absolute right-[2px] top-[3px] size-[7px]"><use href="#down"/></svg></div>
        <label for="ftype">ファイルの種類(<u>T</u>):</label>
        <div class="relative"><select id="ftype" class="appearance-none block w-full h-[14px] bg-[#dcdcdc] border border-[#999] px-[2px]"><option>MPEG-4 (*.mp4)</option></select><svg class="absolute right-[2px] top-[3px] size-[7px]"><use href="#down"/></svg></div>
      </div>
      <div class="w-[68px] flex flex-col gap-[4px]">
        <button class="h-[14px] bg-[#e5e5e5] border-2 border-[#2079ca] leading-[8px]">保存(<u>S</u>)</button>
        <button class="h-[14px] bg-[#e1e1e1] border border-[#b0b0b0]">キャンセル</button>
      </div>
    </div>
  </div>
  <div class="pl-[7px] pt-[4px] pb-[27px] flex flex-col gap-[4px]">
    <div class="flex items-center"><label for="track" class="w-[60px]">出力する軌跡(<u>F</u>):</label>
      <div class="relative w-[102px]"><select id="track" class="appearance-none block w-full h-[12px] bg-[#e3e3e3] border border-[#b0b0b0] px-[2px]"><option>鳥瞰動画</option></select><svg class="absolute right-[2px] top-[3px] size-[7px]"><use href="#down"/></svg></div></div>
    <div class="flex items-center"><label for="size" class="w-[32px]">サイズ(<u>S</u>):</label>
      <div class="relative w-[184px]"><select id="size" class="appearance-none block w-full h-[12px] bg-[#e3e3e3] border border-[#b0b0b0] px-[2px]"><option>XGA (1024 x 768)</option></select><svg class="absolute right-[2px] top-[3px] size-[7px]"><use href="#down"/></svg></div></div>
    <div class="flex items-center"><label for="from" class="w-[32px]">出力時間:</label>
      <input id="from" value="0" class="w-[26px] h-[13px] bg-white border border-[#999] px-[3px]"><span class="w-[17px] pl-px">秒～</span>
      <input aria-label="終了" value="8" class="w-[26px] h-[13px] bg-white border border-[#999] px-[3px]"><span class="w-[16px] pl-[2px]">秒</span>
      <label for="fps" class="w-[57px]">1秒間のコマ数(<u>K</u>):</label><input id="fps" value="15" class="w-[26px] h-[13px] bg-white border border-[#999] px-[3px]"><span class="pl-px">コマ</span></div>
  </div>
  <svg class="absolute right-[2px] bottom-[2px] size-[5px]" viewBox="0 0 5 5"><path stroke="#aaa" d="M0 5l5-5M2.500 5L5 2.500"/></svg>
</div>

<!-- Guide marks -->
<svg class="absolute left-[83px] top-[310px] w-[135px] h-[18px]"><rect x="1" y="1" width="132" height="16" fill="none" stroke="#f00" stroke-width="2" stroke-dasharray="8 4"/></svg>
<svg class="absolute left-[251px] top-[298px] w-[297px] h-[96px]"><rect x="1" y="1" width="295" height="93" fill="none" stroke="#f00" stroke-width="2" stroke-dasharray="8 4"/></svg>
<div class="absolute left-[168px] top-[344px] w-[54px] h-[29px] bg-white border-2 border-[#f00] text-[#222] text-[12px] grid place-items-center">クリック
  <svg class="absolute left-[32px] top-[24px] w-[12px] h-[15px]" viewBox="0 0 12 15"><path fill="#fff" d="M1 0h10v2L8 14 1 2z"/><path fill="none" stroke="#f00" stroke-width="1.500" d="M1 2l6 11 3-11"/></svg>
</div>
<div class="absolute left-[562px] top-[263px] w-[54px] h-[29px] bg-white border-2 border-[#f00] text-[#222] text-[12px] grid place-items-center">クリック
  <svg class="absolute left-[32px] top-[24px] w-[12px] h-[15px]" viewBox="0 0 12 15"><path fill="#fff" d="M1 0h10v2L8 14 1 2z"/><path fill="none" stroke="#f00" stroke-width="1.500" d="M1 2l6 11 3-11"/></svg>
</div>

</body>
</html>
